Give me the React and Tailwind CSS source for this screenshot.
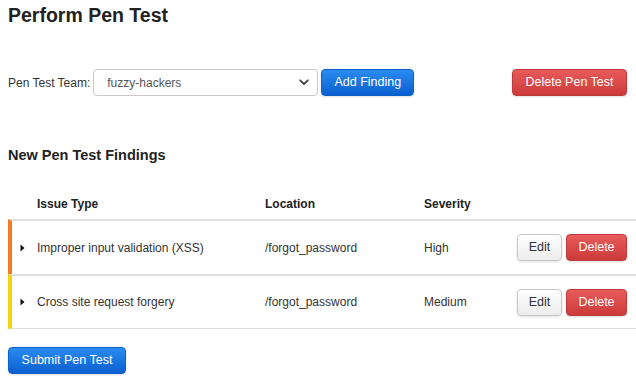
import React from 'react';

const findings = [
  { id: 1, issue: 'Improper input validation (XSS)', location: '/forgot_password', severity: 'High', color: 'border-l-[#f47b20]' },
  { id: 2, issue: 'Cross site request forgery', location: '/forgot_password', severity: 'Medium', color: 'border-l-[#f3d10b]' },
];

const blueBtn =
  'h-[27px] rounded-[4px] border border-[#0b5fc9] bg-gradient-to-b from-[#2a8cf0] to-[#0a5ed0] text-white text-[12.5px] shadow-sm';
const redBtn =
  'h-[27px] rounded-[4px] border border-[#c0393b] bg-gradient-to-b from-[#e85b5b] to-[#cc3a3a] text-white text-[12.5px] shadow-sm';
const greyBtn =
  'h-[27px] rounded-[4px] border border-[#c8c8c8] bg-gradient-to-b from-white to-[#ececec] text-[#333] text-[12.5px] shadow-sm';

function Chevron() {
  return (
    <svg width="10" height="7" viewBox="0 0 10 7" className="text-[#444]">
      <path d="M1.2 1.3 L5 5 L8.8 1.3" fill="none" stroke="currentColor" strokeWidth="1.8" strokeLinecap="round" strokeLinejoin="round" />
    </svg>
  );
}

export default function App() {
  return (
    <div className="w-[636px] h-[380px] overflow-hidden bg-white text-[#333] font-['Liberation_Sans',Arial,sans-serif]">
      <div className="pl-2">
        {/* Title */}
        <h1 className="pt-[3px] text-[19.5px] leading-[24px] font-bold text-[#222]">Perform Pen Test</h1>

        {/* Team selector row */}
        <div className="mt-[42px] flex items-center pr-[9px]">
          <span className="text-[12px] mr-[3px]">Pen Test Team:</span>
          <div className="w-[225px] h-[27px] flex items-center justify-between rounded-[4px] border border-[#c9c9c9] bg-white pl-[13px] pr-[8px] text-[12px] text-[#555]">
            <span>fuzzy-hackers</span>
            <Chevron />
          </div>
          <button className={`${blueBtn} ml-[3px] w-[93px]`}>Add Finding</button>
          <button className={`${redBtn} ml-auto w-[115px]`}>Delete Pen Test</button>
        </div>

        {/* Findings */}
        <h2 className="mt-[49px] text-[14.5px] leading-[20px] font-bold text-[#222]">New Pen Test Findings</h2>

        <div className="mt-[23px] w-[628px]">
          <div className="grid grid-cols-[29px_228px_159px_1fr] items-center h-[31px] text-[12px] font-bold text-[#222]">
            <div />
            <div>Issue Type</div>
            <div>Location</div>
            <div>Severity</div>
          </div>
          {findings.map((f, i) => (
            <div
              key={f.id}
              className={`grid grid-cols-[29px_228px_159px_1fr_auto] items-center h-[55px] border-t-2 border-t-[#dedede] border-l-4 ${f.color} ${
                i === findings.length - 1 ? 'border-b border-b-[#dedede]' : ''
              } text-[12px]`}
            >
              <div className="pl-[8px]">
                <svg width="5" height="8" viewBox="0 0 5 8">
                  <path d="M0.5 0.5 L4.5 4 L0.5 7.5 Z" fill="#111" />
                </svg>
              </div>
              <div className="-ml-[4px]">{f.issue}</div>
              <div className="-ml-[4px]">{f.location}</div>
              <div className="-ml-[4px]">{f.severity}</div>
              <div className="flex gap-[4px] pr-[9px]">
                <button className={`${greyBtn} w-[45px]`}>Edit</button>
                <button className={`${redBtn} w-[61px]`}>Delete</button>
              </div>
            </div>
          ))}
        </div>

        <button className={`${blueBtn} mt-[18px] w-[118px]`}>Submit Pen Test</button>
      </div>
    </div>
  );
}
